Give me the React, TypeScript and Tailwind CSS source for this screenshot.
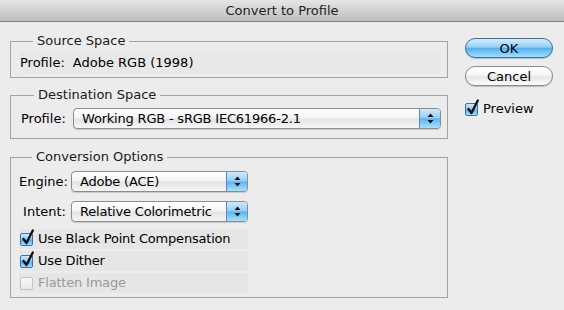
import React from 'react';

const font = { fontFamily: '"DejaVu Sans", "Liberation Sans", sans-serif' };

function Arrows() {
  return (
    <svg width="7" height="11" viewBox="0 0 7 11">
      <path d="M3.5 0.5 L6.5 4 L0.5 4 Z" fill="#111" />
      <path d="M0.5 7 L6.5 7 L3.5 10.5 Z" fill="#111" />
    </svg>
  );
}

function Select({ value, width }: { value: string; width: number }) {
  return (
    <div
      className="flex h-[21px] items-stretch rounded-[4px] border border-[#8c8c8c] bg-[linear-gradient(to_bottom,#ffffff_0%,#f4f4f4_45%,#e4e4e4_55%,#f6f6f6_100%)] shadow-[0_1px_1px_rgba(0,0,0,0.15)]"
      style={{ width }}
    >
      <div className="flex flex-1 items-center pl-[8px] text-[13px] leading-none tracking-[-0.2px] text-black">{value}</div>
      <div className="flex w-[21px] items-center justify-center rounded-r-[3px] border-l border-[#5a86be] bg-[linear-gradient(to_bottom,#cfe9fb_0%,#97d0f6_45%,#5db4ef_52%,#a6e2fd_100%)]">
        <Arrows />
      </div>
    </div>
  );
}

function Check({ checked, disabled }: { checked?: boolean; disabled?: boolean }) {
  if (disabled) {
    return (
      <div className="h-[13px] w-[13px] rounded-[2px] border border-[#c4c4c4] bg-[linear-gradient(to_bottom,#f7f7f7,#e9e9e9)]" />
    );
  }
  return (
    <div className="relative h-[13px] w-[13px] rounded-[2px] border border-[#3f6fa8] bg-[linear-gradient(to_bottom,#cfe9fb_0%,#8fcdf5_45%,#58b0ed_55%,#a4e0fd_100%)]">
      {checked && (
        <svg className="absolute left-[0px] top-[-5px]" width="14" height="17" viewBox="0 0 14 17">
          <path d="M2.5 10 L5.5 14 L11.8 1.5" fill="none" stroke="#0d0d0d" strokeWidth="2.3" strokeLinecap="round" strokeLinejoin="round" />
        </svg>
      )}
    </div>
  );
}

function CheckRow({ label, checked, disabled }: { label: string; checked?: boolean; disabled?: boolean }) {
  return (
    <div className="flex h-[20px] w-[229px] items-center gap-[5px] bg-[#e6e6e6] pl-[1px]">
      <Check checked={checked} disabled={disabled} />
      <span className={disabled ? 'text-[13px] tracking-[-0.2px] text-[#9a9a9a]' : 'text-[13px] tracking-[-0.2px] text-black'}>{label}</span>
    </div>
  );
}

function Box({ title, children, className }: { title: string; children: React.ReactNode; className?: string }) {
  return (
    <fieldset className={`w-[438px] border border-[#a3a3a3] ${className ?? ''}`}>
      <legend className="ml-[13px] px-[4px] text-[13px] leading-[16px] text-[#1a1a1a]">{title}</legend>
      {children}
    </fieldset>
  );
}

export default function App() {
  return (
    <div className="h-[310px] w-[564px] overflow-hidden bg-[#ececec] text-black" style={font}>
      {/* title bar */}
      <div className="flex h-[22px] items-center justify-center border-b border-[#7f7f7f] bg-[linear-gradient(to_bottom,#e6e6e6,#bdbdbd)] text-[13px] text-[#1e1e1e]">
        Convert to Profile
      </div>

      <div className="flex pl-[10px] pt-[11px]">
        <div className="flex flex-col">
          <Box title="Source Space" className="pb-[3px] pl-[9px] pr-[7px] pt-[3px]">
            <div className="flex h-[22px] items-center bg-[#e8e8e8] text-[13px]">
              <span>Profile:</span>
              <span className="ml-[8px]">Adobe RGB (1998)</span>
            </div>
          </Box>

          <Box title="Destination Space" className="mt-[9px] pb-[9px] pl-[10px] pt-[5px]">
            <div className="flex items-center">
              <span className="w-[52px] text-[13px]">Profile:</span>
              <Select value="Working RGB - sRGB IEC61966-2.1" width={368} />
            </div>
          </Box>

          <Box title="Conversion Options" className="mt-[10px] pb-[4px] pl-[8px] pt-[6px]">
            <div className="flex items-center">
              <span className="w-[52px] pr-[5px] text-right text-[13px]">Engine:</span>
              <Select value="Adobe (ACE)" width={177} />
            </div>
            <div className="mt-[9px] flex items-center">
              <span className="w-[52px] pr-[5px] text-right text-[13px]">Intent:</span>
              <Select value="Relative Colorimetric" width={177} />
            </div>
            <div className="mt-[7px] flex flex-col gap-[2px]">
              <CheckRow label="Use Black Point Compensation" checked />
              <CheckRow label="Use Dither" checked />
              <CheckRow label="Flatten Image" disabled />
            </div>
          </Box>
        </div>

        <div className="ml-[17px] mt-[5px] flex w-[88px] flex-col">
          <button className="h-[20px] w-[88px] rounded-full border border-[#3b6ea8] bg-[linear-gradient(to_bottom,#d4ecfc_0%,#95d0f6_45%,#57afee_52%,#9ee0ff_100%)] text-[13px] leading-none text-black shadow-[0_1px_1px_rgba(0,0,0,0.2)]">
            OK
          </button>
          <button className="mt-[8px] h-[20px] w-[88px] rounded-full border border-[#8a8a8a] bg-[linear-gradient(to_bottom,#ffffff_0%,#f6f6f6_45%,#e6e6e6_55%,#fbfbfb_100%)] text-[13px] leading-none text-black shadow-[0_1px_1px_rgba(0,0,0,0.2)]">
            Cancel
          </button>
          <div className="mt-[15px] flex h-[16px] items-center gap-[5px]">
            <Check checked />
            <span className="text-[13px]">Preview</span>
          </div>
        </div>
      </div>
    </div>
  );
}
